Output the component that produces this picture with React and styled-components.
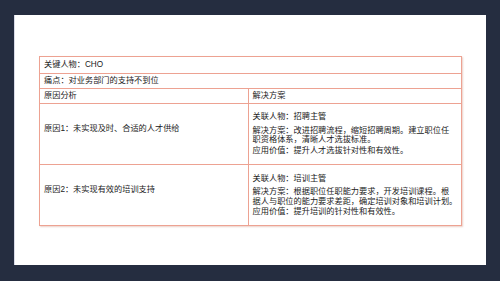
import React from "react";
import styled, { createGlobalStyle } from "styled-components";

const Global = createGlobalStyle`
  html, body { margin: 0; padding: 0; background: #252d40; }
  body {
    width: 500px;
    height: 281px;
    overflow: hidden;
    font-family: "Liberation Sans", "Noto Sans CJK SC", sans-serif;
  }
`;

const Stage = styled.div`
  width: 500px;
  height: 281px;
  padding: 15px 0 0 14px;
  box-sizing: border-box;
`;

const Slide = styled.div`
  width: 472px;
  height: 250px;
  background: #ffffff;
  box-sizing: border-box;
  border-left: 1px solid #d9dbe8;
  padding: 40.7px 0 0 24px;
`;

const Table = styled.div`
  width: 422.5px;
  display: grid;
  grid-template-columns: 207.6px 1fr;
  grid-template-rows: 16.7px 13.5px 13.8px 60px 60.8px;
  gap: 1px;
  padding: 1px;
  background: #eda292;
  box-sizing: border-box;
  box-shadow: 1px 1px 1.5px rgba(200, 120, 100, 0.35);
`;

const Cell = styled.div`
  background: #ffffff;
  grid-column: ${(p) => (p.$full ? "1 / span 2" : "auto")};
  display: flex;
  flex-direction: column;
  justify-content: center;
  padding: 0 4px ${(p) => (p.$raise ? "10px" : "0")} 4px;
  box-sizing: border-box;
  font-size: 8.2px;
  line-height: 1.15;
  color: #222222;
  white-space: nowrap;
`;

const Para = styled.div`
  font-size: 8.2px;
  line-height: 9.4px;
  color: #222222;
  white-space: nowrap;
  margin-bottom: ${(p) => (p.$gap ? p.$gap : "0")};
`;

const rows = [
  {
    reason: "原因1：未实现及时、合适的人才供给",
    person: "关联人物：招聘主管",
    plan: ["解决方案：改进招聘流程，缩短招聘周期。建立职位任", "职资格体系，清晰人才选拔标准。"],
    value: "应用价值：提升人才选拔针对性和有效性。",
  },
  {
    reason: "原因2：未实现有效的培训支持",
    person: "关联人物：培训主管",
    plan: ["解决方案：根据职位任职能力要求，开发培训课程。根", "据人与职位的能力要求差距，确定培训对象和培训计划。"],
    value: "应用价值：提升培训的针对性和有效性。",
  },
];

export default function App() {
  return (
    <>
      <Global />
      <Stage>
        <Slide>
          <Table>
            <Cell $full>关键人物：CHO</Cell>
            <Cell $full>痛点：对业务部门的支持不到位</Cell>
            <Cell>原因分析</Cell>
            <Cell>解决方案</Cell>
            {rows.map((r) => (
              <React.Fragment key={r.reason}>
                <Cell $raise>{r.reason}</Cell>
                <Cell>
                  <Para $gap="4.3px">{r.person}</Para>
                  {r.plan.map((line, i) => (
                    <Para key={i} $gap={i === r.plan.length - 1 ? "1.2px" : "0"}>
                      {line}
                    </Para>
                  ))}
                  <Para>{r.value}</Para>
                </Cell>
              </React.Fragment>
            ))}
          </Table>
        </Slide>
      </Stage>
    </>
  );
}
